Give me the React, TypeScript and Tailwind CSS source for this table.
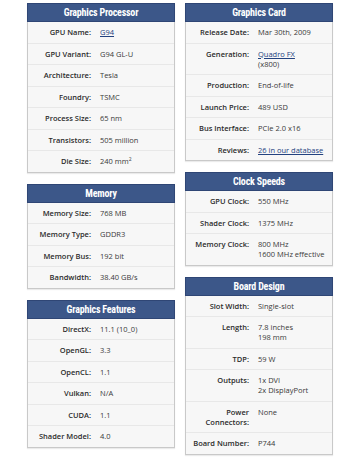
import React from 'react';

type Row = { label: string; value: React.ReactNode };

const link = 'text-[#23427f] underline';

const sections: { title: string; rows: Row[] }[][] = [
  [
    {
      title: 'Graphics Processor',
      rows: [
        { label: 'GPU Name:', value: <span className={link}>G94</span> },
        { label: 'GPU Variant:', value: 'G94 GL-U' },
        { label: 'Architecture:', value: 'Tesla' },
        { label: 'Foundry:', value: 'TSMC' },
        { label: 'Process Size:', value: '65 nm' },
        { label: 'Transistors:', value: '505 million' },
        { label: 'Die Size:', value: <>240 mm<span className="relative -top-[3px] text-[5px] leading-none">2</span></> },
      ],
    },
    {
      title: 'Memory',
      rows: [
        { label: 'Memory Size:', value: '768 MB' },
        { label: 'Memory Type:', value: 'GDDR3' },
        { label: 'Memory Bus:', value: '192 bit' },
        { label: 'Bandwidth:', value: '38.40 GB/s' },
      ],
    },
    {
      title: 'Graphics Features',
      rows: [
        { label: 'DirectX:', value: '11.1 (10_0)' },
        { label: 'OpenGL:', value: '3.3' },
        { label: 'OpenCL:', value: '1.1' },
        { label: 'Vulkan:', value: 'N/A' },
        { label: 'CUDA:', value: '1.1' },
        { label: 'Shader Model:', value: '4.0' },
      ],
    },
  ],
  [
    {
      title: 'Graphics Card',
      rows: [
        { label: 'Release Date:', value: 'Mar 30th, 2009' },
        { label: 'Generation:', value: <><span className={link}>Quadro FX</span><br />(x800)</> },
        { label: 'Production:', value: 'End-of-life' },
        { label: 'Launch Price:', value: '489 USD' },
        { label: 'Bus Interface:', value: 'PCIe 2.0 x16' },
        { label: 'Reviews:', value: <span className={link}>26 in our database</span> },
      ],
    },
    {
      title: 'Clock Speeds',
      rows: [
        { label: 'GPU Clock:', value: '550 MHz' },
        { label: 'Shader Clock:', value: '1375 MHz' },
        { label: 'Memory Clock:', value: <>800 MHz<br />1600 MHz effective</> },
      ],
    },
    {
      title: 'Board Design',
      rows: [
        { label: 'Slot Width:', value: 'Single-slot' },
        { label: 'Length:', value: <>7.8 inches<br />198 mm</> },
        { label: 'TDP:', value: '59 W' },
        { label: 'Outputs:', value: <>1x DVI<br />2x DisplayPort</> },
        { label: 'Power Connectors:', value: 'None' },
        { label: 'Board Number:', value: 'P744' },
      ],
    },
  ],
];

function SpecCard({ title, rows }: { title: string; rows: Row[] }) {
  return (
    <div className="w-[148px] border border-[#c9c9c9] bg-[#f7f7f7] shadow-[0_1px_1px_rgba(0,0,0,0.08)]">
      <div className="-mx-px -mt-px h-[19px] border border-[#2f4675] bg-[#3c5789] text-center text-[10px] font-bold leading-[17px] tracking-[-0.2px] text-white [font-family:'Liberation_Sans_Narrow','Roboto_Condensed','Open_Sans',sans-serif]">
        {title}
      </div>
      {rows.map((r, i) => (
        <div
          key={r.label}
          className={`flex py-[5.25px] text-[7.5px] leading-[10px] text-[#333] ${i > 0 ? 'border-t border-[#e8e8e8]' : ''}`}
        >
          <div className="w-[63px] shrink-0 pl-[6px] text-right font-semibold text-[#2b2b2b]">{r.label}</div>
          <div className="pl-[9px] text-[#3a3a3a]">{r.value}</div>
        </div>
      ))}
    </div>
  );
}

export default function App() {
  return (
    <div className="h-[460px] w-[360px] bg-white pl-[27px] pt-[3px] [font-family:'Open_Sans',sans-serif]">
      <div className="flex items-start gap-[10px]">
        {sections.map((col, ci) => (
          <div key={ci} className="flex flex-col gap-[11px]">
            {col.map((s) => (
              <SpecCard key={s.title} title={s.title} rows={s.rows} />
            ))}
          </div>
        ))}
      </div>
    </div>
  );
}
